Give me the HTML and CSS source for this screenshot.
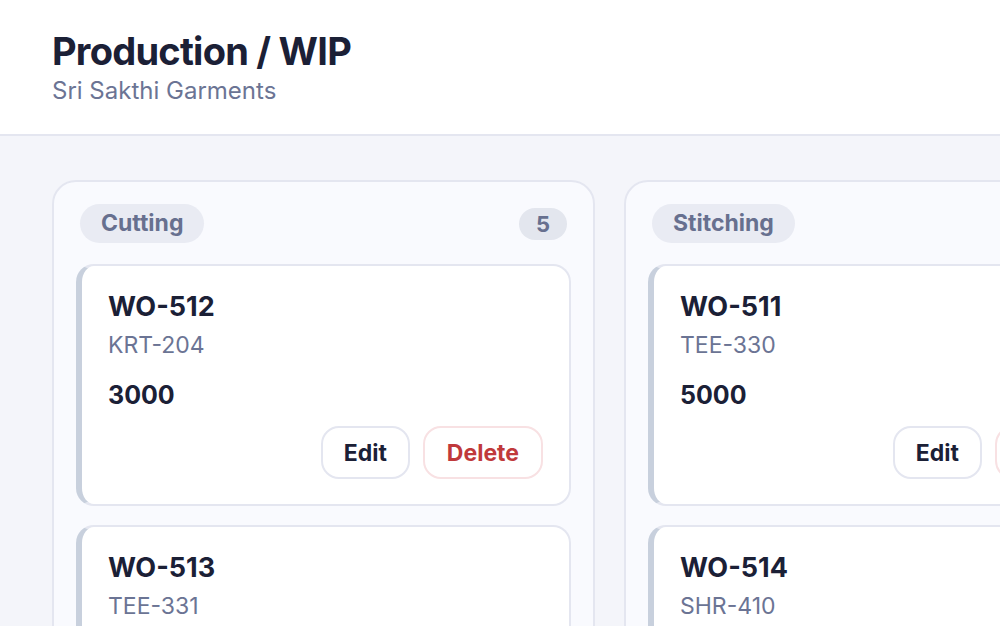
FILE: index.html
```html
<!DOCTYPE html>
<html lang="en">
<head>
    <meta charset="UTF-8">
    <meta name="viewport" content="width=device-width, initial-scale=1.0">
    <title>Production / WIP</title>

    <link rel="stylesheet" href="styles.css">
</head>
<body>
    <header class="topbar">
        <h1 class="page-title">Production / WIP</h1>
        <div class="page-sub">Sri Sakthi Garments</div>
    </header>

    <main class="board">
        <section class="column">
            <div class="column-head">
                <span class="stage-pill">Cutting</span>
                <span class="count-pill">5</span>
            </div>
            <div class="card">
                <div class="wo-no">WO-512</div>
                <div class="style-no">KRT-204</div>
                <div class="qty">3000</div>
                <div class="card-actions">
                    <button class="btn">Edit</button>
                    <button class="btn btn-danger">Delete</button>
                </div>
            </div>
            <div class="card">
                <div class="wo-no">WO-513</div>
                <div class="style-no">TEE-331</div>
                <div class="qty">1200</div>
                <div class="card-actions">
                    <button class="btn">Edit</button>
                    <button class="btn btn-danger">Delete</button>
                </div>
            </div>
        </section>

        <section class="column">
            <div class="column-head">
                <span class="stage-pill">Stitching</span>
                <span class="count-pill">3</span>
            </div>
            <div class="card">
                <div class="wo-no">WO-511</div>
                <div class="style-no">TEE-330</div>
                <div class="qty">5000</div>
                <div class="card-actions">
                    <button class="btn">Edit</button>
                    <button class="btn btn-danger">Delete</button>
                </div>
            </div>
            <div class="card">
                <div class="wo-no">WO-514</div>
                <div class="style-no">SHR-410</div>
                <div class="qty">2400</div>
                <div class="card-actions">
                    <button class="btn">Edit</button>
                    <button class="btn btn-danger">Delete</button>
                </div>
            </div>
        </section>
    </main>
</body>
</html>
```

FILE: styles.css
```css
body {
    margin: 0;
    font-family: Inter, "Noto Sans", sans-serif;
    background-color: #f4f5fa;
    color: #1b2036;
    overflow: hidden;
}

.topbar {
    background: #fff;
    border-bottom: 2px solid #e4e6f0;
    padding: 28px 52px 27px;
}

.page-title {
    margin: 0;
    font-size: 38px;
    font-weight: 700;
    letter-spacing: -0.75px;
    line-height: 46px;
}

.page-sub {
    font-size: 24px;
    color: #6b7494;
    line-height: 32px;
    margin-top: 1px;
}

.board {
    display: flex;
    gap: 29px;
    padding: 44px 52px;
    align-items: flex-start;
}

.column {
    flex: 0 0 543px;
    box-sizing: border-box;
    background: #f9fafe;
    border: 2px solid #e4e6f0;
    border-radius: 24px;
    padding: 22px;
}

.column-head {
    display: flex;
    justify-content: space-between;
    align-items: center;
    padding: 0 4px;
    margin-bottom: 21px;
}

.stage-pill {
    background: #e9ebf3;
    color: #67708f;
    font-size: 23px;
    font-weight: 700;
    padding: 0 21px;
    line-height: 39px;
    border-radius: 20px;
}

.count-pill {
    background: #e3e6ee;
    color: #67708f;
    font-size: 22px;
    font-weight: 700;
    min-width: 48px;
    text-align: center;
    line-height: 32px;
    border-radius: 16px;
}

.card {
    background: #fff;
    border: 2px solid #e4e6f0;
    border-left: 6px solid #c8d0dd;
    border-radius: 18px;
    padding: 24px 26px 25px;
    margin-bottom: 19px;
}

.wo-no {
    font-size: 27px;
    font-weight: 700;
    line-height: 34px;
}

.style-no {
    font-size: 23px;
    color: #6b7494;
    line-height: 34px;
    margin-top: 4px;
}

.qty {
    font-size: 25px;
    font-weight: 700;
    line-height: 34px;
    margin-top: 16px;
}

.card-actions {
    display: flex;
    justify-content: flex-end;
    gap: 13px;
    margin-top: 14px;
}

.btn {
    font-family: inherit;
    font-size: 23px;
    font-weight: 700;
    color: #1b2036;
    background: #fff;
    border: 2px solid #e4e6f0;
    border-radius: 18px;
    height: 53px;
    padding: 0 21px;
}

.btn-danger {
    color: #c0393b;
    border-color: #f8e1e3;
    padding: 0 22px;
}
```
